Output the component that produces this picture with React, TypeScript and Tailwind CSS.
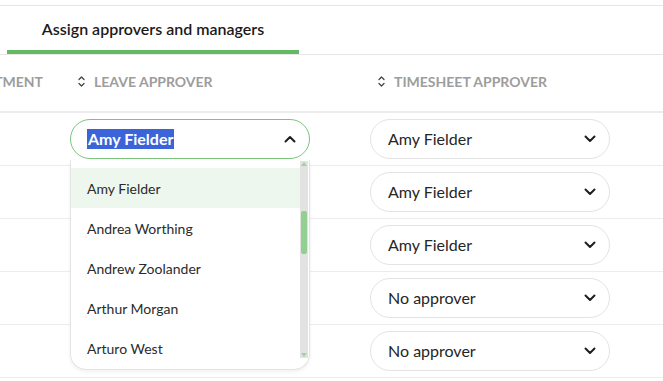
import React from "react";

const font = { fontFamily: "Lato, 'Noto Sans', sans-serif" };

const SortIcon = () => (
  <svg width="7" height="11" viewBox="0 0 7 11" fill="none" className="shrink-0">
    <path d="M1 3.5L3.5 1L6 3.5" stroke="#444" strokeWidth="1.3" strokeLinecap="round" strokeLinejoin="round" />
    <path d="M1 7.5L3.5 10L6 7.5" stroke="#444" strokeWidth="1.3" strokeLinecap="round" strokeLinejoin="round" />
  </svg>
);

const Chevron = ({ up = false }: { up?: boolean }) => (
  <svg width="12" height="8" viewBox="0 0 12 8" fill="none">
    <path
      d={up ? "M1.5 6.5L6 2L10.5 6.5" : "M1.5 1.5L6 6L10.5 1.5"}
      stroke="#1f1f1f"
      strokeWidth="2"
      strokeLinecap="round"
      strokeLinejoin="round"
    />
  </svg>
);

const Select = ({ value }: { value: string }) => (
  <div className="flex h-[40px] w-[240px] items-center justify-between rounded-full border border-[#e3e3e3] bg-white pl-[17px] pr-[13px]">
    <span className="text-[16px] text-[#262626]">{value}</span>
    <Chevron />
  </div>
);

const OpenSelect = () => (
  <div className="relative w-[240px]">
    <div className="flex h-[40px] items-center justify-between rounded-full border border-[#7cc47c] bg-white pl-[16px] pr-[13px]">
      <span className="bg-[#3a64d8] px-[1px] text-[16px] font-bold leading-[20px] text-white">Amy Fielder</span>
      <Chevron up />
    </div>
    <div className="absolute left-0 top-[41px] z-10 h-[210px] w-[240px] overflow-hidden rounded-b-[16px] border border-t-0 border-[#e4e4e4] bg-white shadow-[0_2px_4px_rgba(0,0,0,0.06)]">
      <div className="flex h-full">
        <div className="flex-1 pt-[8px]">
          {options.map((o, i) => (
            <div
              key={o}
              className={`flex h-[40px] items-center pl-[16px] text-[14px] text-[#2b2b2b] ${i === 0 ? "bg-[#eef7ee]" : ""}`}
            >
              {o}
            </div>
          ))}
        </div>
        <div className="relative mr-[1px] mt-[1px] h-[197px] w-[8px] bg-[#e2e2e2]">
          <div className="absolute left-[1px] top-[1px] h-0 w-0 border-x-[3px] border-b-[4px] border-x-transparent border-b-[#9fd49f]" />
          <div className="absolute left-[1px] top-[50px] h-[43px] w-[6px] rounded-[2px] bg-[#92d092]" />
          <div className="absolute bottom-[1px] left-[1px] h-0 w-0 border-x-[3px] border-t-[4px] border-x-transparent border-t-[#9fd49f]" />
        </div>
      </div>
    </div>
  </div>
);

const rows = ["Amy Fielder", "Amy Fielder", "Amy Fielder", "No approver", "No approver"];
const options = ["Amy Fielder", "Andrea Worthing", "Andrew Zoolander", "Arthur Morgan", "Arturo West"];

export default function App() {
  return (
    <div className="h-[381px] w-[663px] overflow-hidden bg-white" style={font}>
      <div className="h-[5px]" />
      <div className="flex h-[50px] border-y border-[#e6e6e6]">
        <div className="ml-[7px] flex w-[292px] flex-col">
          <div className="flex flex-1 items-center justify-center pt-[1px] text-[16px] font-semibold text-[#1a1a1a]">
            Assign approvers and managers
          </div>
          <div className="h-[4px] bg-[#62bb62]" />
        </div>
      </div>

      <div className="flex h-[58px] items-center border-b-2 border-[#ececec] pb-[4px] text-[14px] font-bold uppercase text-[#9d9d9d]">
        <div className="w-[62px] overflow-hidden">
          <div className="flex justify-end pr-[19px]">
            <span className="whitespace-nowrap">Department</span>
          </div>
        </div>
        <div className="flex w-[300px] items-center gap-[9px] pl-[16px]">
          <SortIcon />
          Leave approver
        </div>
        <div className="flex items-center gap-[9px] pl-[16px]">
          <SortIcon />
          Timesheet approver
        </div>
      </div>

      {rows.map((v, i) => (
        <div key={i} className="flex h-[53px] items-center border-b border-[#ececec]">
          <div className="w-[62px]" />
          <div className="w-[300px] pl-[8px]">{i === 0 ? <OpenSelect /> : <div className="h-[40px]" />}</div>
          <div className="pl-[8px]">
            <Select value={v} />
          </div>
        </div>
      ))}
    </div>
  );
}
